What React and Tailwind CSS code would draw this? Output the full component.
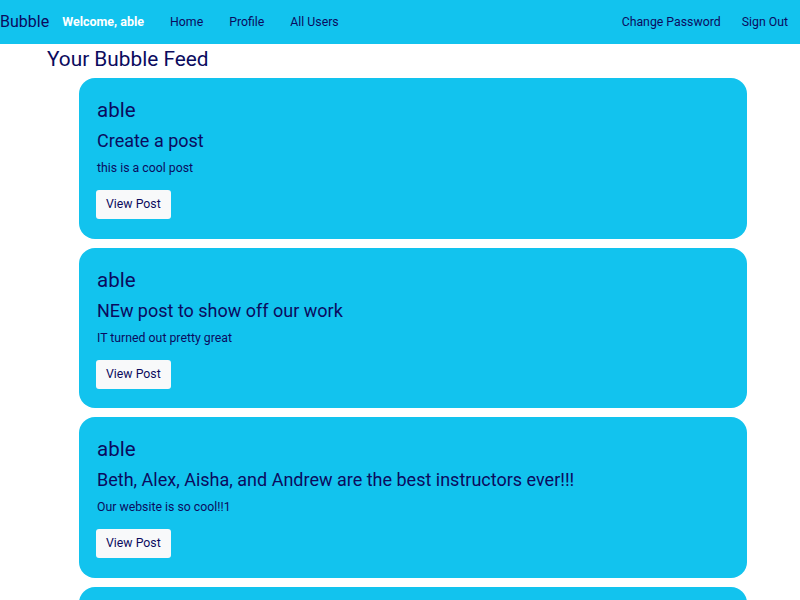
import React from "react";

const posts = [
  { author: "able", title: "Create a post", body: "this is a cool post" },
  { author: "able", title: "NEw post to show off our work", body: "IT turned out pretty great" },
  { author: "able", title: "Beth, Alex, Aisha, and Andrew are the best instructors ever!!!", body: "Our website is so cool!!1" },
  { author: "able", title: "Another post", body: "more content" },
];

function NavLink({ children }) {
  return <a className="text-[12.3px] text-[#0b0b5e] cursor-pointer">{children}</a>;
}

function PostCard({ post }) {
  return (
    <div className="rounded-[16px] bg-[#12c3ee] pl-[17px] pr-5 pt-5 pb-[19.5px]">
      <div className="pl-px text-[20.5px] leading-[24px] text-[#0b0b5e]">{post.author}</div>
      <div className="mt-2 pl-px text-[18px] leading-[22px] text-[#0b0b5e]">{post.title}</div>
      <p className="mt-[8px] pl-px text-[12.3px] leading-[16px] text-[#0b0b5e]">{post.body}</p>
      <button className="mt-[14px] h-[29px] rounded-[3px] bg-[#f8f9fa] px-[10px] text-[12.3px] text-[#0b0b5e]">
        View Post
      </button>
    </div>
  );
}

export default function App() {
  return (
    <div className="min-h-screen bg-white font-['Roboto',sans-serif]">
      <nav className="flex h-[44px] items-center bg-[#12c3ee]">
        <span className="text-[16px] text-[#0b0b5e]">Bubble</span>
        <span className="ml-[13px] text-[12.5px] font-bold text-white">Welcome, able</span>
        <div className="ml-[26px] flex gap-[26px]">
          <NavLink>Home</NavLink>
          <NavLink>Profile</NavLink>
          <NavLink>All Users</NavLink>
        </div>
        <div className="ml-auto mr-3 flex gap-[21px]">
          <NavLink>Change Password</NavLink>
          <NavLink>Sign Out</NavLink>
        </div>
      </nav>
      <main className="pl-[47px]">
        <h1 className="pt-[2px] text-[20.8px] leading-[26px] text-[#0b0b5e]">Your Bubble Feed</h1>
        <div className="ml-[32px] mt-[6px] flex w-[668px] flex-col gap-[9px] pb-6">
          {posts.map((post, i) => (
            <PostCard key={i} post={post} />
          ))}
        </div>
      </main>
    </div>
  );
}
